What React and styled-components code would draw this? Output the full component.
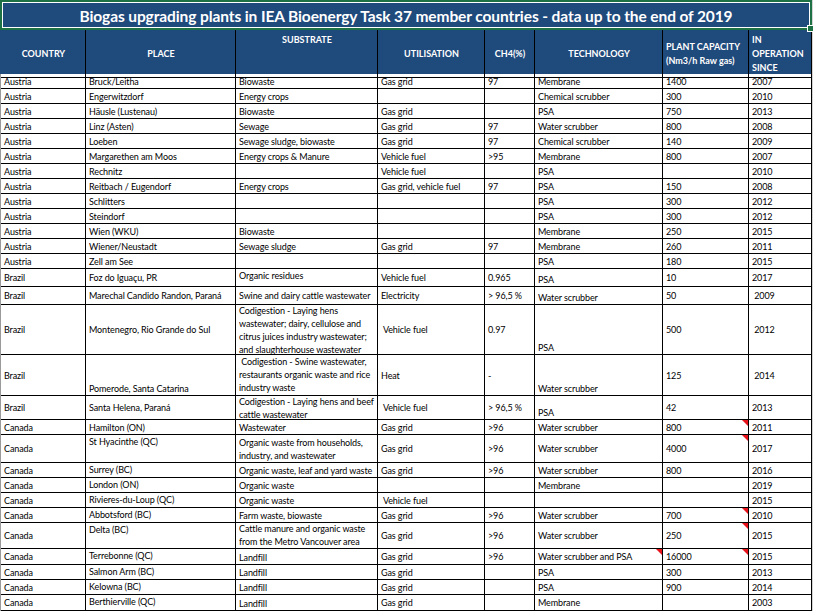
import React from 'react'
import styled, { createGlobalStyle } from 'styled-components'

const GlobalStyle = createGlobalStyle`
    html, body {
        margin : 0;
        padding : 0;
        background : #ffffff;
        overflow : hidden;
    }
    body {
        font-family : Lato, "Open Sans", sans-serif;
    }
`;

const COLS = '85px 150px 142px 107px 50px 128px 86px 63px';

// a cell is either a plain string or {t, v, mark}
const rows = [
    { h: 15, c: ['Austria', 'Bruck/Leitha', 'Biowaste', 'Gas grid', '97', 'Membrane', '1400', '2007'] },
    { h: 15, c: ['Austria', 'Engerwitzdorf', 'Energy crops', '', '', 'Chemical scrubber', '300', '2010'] },
    { h: 15, c: ['Austria', 'Häusle (Lustenau)', 'Biowaste', 'Gas grid', '', 'PSA', '750', '2013'] },
    { h: 15, c: ['Austria', 'Linz (Asten)', 'Sewage', 'Gas grid', '97', 'Water scrubber', '800', '2008'] },
    { h: 15, c: ['Austria', 'Loeben', 'Sewage sludge, biowaste', 'Gas grid', '97', 'Chemical scrubber', '140', '2009'] },
    { h: 15, c: ['Austria', 'Margarethen am Moos', 'Energy crops & Manure', 'Vehicle fuel', '>95', 'Membrane', '800', '2007'] },
    { h: 15, c: ['Austria', 'Rechnitz', '', 'Vehicle fuel', '', 'PSA', '', '2010'] },
    { h: 15, c: ['Austria', 'Reitbach / Eugendorf', 'Energy crops', 'Gas grid, vehicle fuel', '97', 'PSA', '150', '2008'] },
    { h: 15, c: ['Austria', 'Schlitters', '', '', '', 'PSA', '300', '2012'] },
    { h: 15, c: ['Austria', 'Steindorf', '', '', '', 'PSA', '300', '2012'] },
    { h: 15, c: ['Austria', 'Wien (WKU)', 'Biowaste', '', '', 'Membrane', '250', '2015'] },
    { h: 15, c: ['Austria', 'Wiener/Neustadt', 'Sewage sludge', 'Gas grid', '97', 'Membrane', '260', '2011'] },
    { h: 15, c: ['Austria', 'Zell am See', '', '', '', 'PSA', '180', '2015'] },
    { h: 18, c: ['Brazil', 'Foz do Iguaçu, PR', { t: 'Organic residues', v: 'flex-start' }, 'Vehicle fuel', '0.965', { t: 'PSA', v: 'flex-end' }, '10', '2017'] },
    { h: 18, c: ['Brazil', 'Marechal Candido Randon, Paraná', 'Swine and dairy cattle wastewater', 'Electricity', '> 96,5 %', { t: 'Water scrubber', v: 'flex-end' }, '50', '\u00a02009'] },
    {
        h: 50, c: ['Brazil', 'Montenegro, Rio Grande do Sul',
            'Codigestion - Laying hens\nwastewater; dairy, cellulose and\ncitrus juices industry wastewater;\nand slaughterhouse wastewater',
            '\u00a0Vehicle fuel', '0.97', { t: 'PSA', v: 'flex-end' }, '500', '\u00a02012']
    },
    {
        h: 41, c: ['Brazil', { t: 'Pomerode, Santa Catarina', v: 'flex-end' },
            { t: '\u00a0Codigestion - Swine wastewater,\nrestaurants organic waste and rice\nindustry waste', v: 'flex-start' },
            'Heat', '-', { t: 'Water scrubber', v: 'flex-end' }, '125', '\u00a02014']
    },
    {
        h: 24, c: ['Brazil', 'Santa Helena, Paraná', 'Codigestion - Laying hens and beef\ncattle wastewater',
            '\u00a0Vehicle fuel', '> 96,5 %', { t: 'PSA', v: 'flex-end' }, '42', '2013']
    },
    { h: 15, c: ['Canada', 'Hamilton (ON)', { t: 'Wastewater', v: 'flex-end' }, 'Gas grid', '>96', 'Water scrubber', { t: '800', mark: true }, '2011'] },
    {
        h: 28, c: ['Canada', { t: 'St Hyacinthe (QC)', v: 'flex-start' },
            { t: 'Organic waste from households,\nindustry, and wastewater', v: 'flex-end' },
            'Gas grid', '>96', 'Water scrubber', { t: '4000', mark: true }, '2017']
    },
    { h: 15, c: ['Canada', { t: 'Surrey (BC)', v: 'flex-start' }, { t: 'Organic waste, leaf and yard waste', v: 'flex-end' }, 'Gas grid', '>96', 'Water scrubber', '800', '2016'] },
    { h: 15, c: ['Canada', { t: 'London (ON)', v: 'flex-start' }, { t: 'Organic waste', v: 'flex-end' }, '', '', 'Membrane', '', '2019'] },
    { h: 15, c: ['Canada', { t: 'Rivieres-du-Loup (QC)', v: 'flex-start' }, { t: 'Organic waste', v: 'flex-end' }, '\u00a0Vehicle fuel', '', '', '', '2015'] },
    { h: 15, c: ['Canada', { t: 'Abbotsford (BC)', v: 'flex-start' }, { t: 'Farm waste, biowaste', v: 'flex-end' }, 'Gas grid', '>96', 'Water scrubber', { t: '700', mark: true }, '2010'] },
    {
        h: 26, c: ['Canada', { t: 'Delta (BC)', v: 'flex-start' },
            { t: 'Cattle manure and organic waste\nfrom the Metro Vancouver area', v: 'flex-end' },
            'Gas grid', '>96', 'Water scrubber', { t: '250', mark: true }, '2015']
    },
    { h: 16, c: ['Canada', { t: 'Terrebonne (QC)', v: 'flex-start' }, { t: 'Landfill', v: 'flex-end' }, 'Gas grid', '>96', { t: 'Water scrubber and PSA', mark: true }, { t: '16000', mark: true }, '2015'] },
    { h: 15, c: ['Canada', { t: 'Salmon Arm (BC)', v: 'flex-start' }, { t: 'Landfill', v: 'flex-end' }, 'Gas grid', '', 'PSA', '300', '2013'] },
    { h: 15, c: ['Canada', { t: 'Kelowna (BC)', v: 'flex-start' }, { t: 'Landfill', v: 'flex-end' }, 'Gas grid', '', 'PSA', '900', '2014'] },
    { h: 16, c: ['Canada', { t: 'Berthierville (QC)', v: 'flex-start' }, { t: 'Landfill', v: 'flex-end' }, 'Gas grid', '', 'Membrane', '', '2003'] },
];

const headers = [
    { t: 'COUNTRY', align: 'center', v: 'center' },
    { t: 'PLACE', align: 'center', v: 'center' },
    { t: 'SUBSTRATE', align: 'center', v: 'flex-start' },
    { t: 'UTILISATION', align: 'center', v: 'center' },
    { t: 'CH4(%)', align: 'center', v: 'center' },
    { t: 'TECHNOLOGY', align: 'center', v: 'center' },
    { t: 'PLANT CAPACITY\n(Nm3/h Raw gas)', align: 'left', v: 'center' },
    { t: 'IN\nOPERATION\nSINCE', align: 'left', v: 'flex-start' },
];

const App = () => {
    return (<>
        <GlobalStyle />
        <Sheet>
            <TitleBar>
                <h1>Biogas upgrading plants in IEA Bioenergy Task 37 member countries - data up to the end of 2019</h1>
                <Handle />
            </TitleBar>
            <HeaderRow>
                {headers.map((hd, i) => (
                    <HeadCell key={i} $align={hd.align} $v={hd.v}>
                        <span>{hd.t}</span>
                    </HeadCell>
                ))}
            </HeaderRow>
            {rows.map((row, r) => (
                <Row key={r} $h={row.h}>
                    {row.c.map((cell, i) => {
                        const c = typeof cell === 'string' ? { t: cell } : cell;
                        return (
                            <Cell key={i} $v={c.v || 'center'}>
                                <span>{c.t}</span>
                                {c.mark && <Marker />}
                            </Cell>
                        )
                    })}
                </Row>
            ))}
        </Sheet>
    </>);
}

const Sheet = styled.div`
    display : flex;
    flex-direction : column;
    border-right : 1px solid #d4d4d4;
    width : 812px;
`;

const TitleBar = styled.div`
    position : relative;
    height : 30px;
    box-sizing : border-box;
    background-color : #1f4a7c;
    border : 2px solid #1e7145;
    box-shadow : inset 0 0 0 1px #ffffff;
    display : flex;
    align-items : center;
    justify-content : center;
    h1 {
        margin : 0;
        padding-top : 2px;
        color : #ffffff;
        font-family : Lato, sans-serif;
        font-weight : 700;
        font-size : 15.5px;
        letter-spacing : -0.1px;
    }
`;

const Handle = styled.div`
    position : absolute;
    right : -4px;
    bottom : -4px;
    width : 5px;
    height : 5px;
    background-color : #1e7145;
    border : 1px solid #ffffff;
`;

const HeaderRow = styled.div`
    display : grid;
    grid-template-columns : ${COLS};
    height : 44px;
    background-color : #1f4a7c;
    border-left : 1px solid #1f4a7c;
    width : 811px;
`;

const HeadCell = styled.div`
    display : flex;
    box-sizing : border-box;
    align-items : ${p => p.$v};
    justify-content : ${p => p.$align === 'left' ? 'flex-start' : 'center'};
    border-right : 1px solid #000000;
    border-bottom : 1px solid #000000;
    padding : 3px 2px 2px 3px;
    span {
        color : #ffffff;
        font-weight : 700;
        font-size : 9px;
        line-height : 14px;
        white-space : pre-line;
        text-align : left;
    }
`;

const Row = styled.div`
    display : grid;
    grid-template-columns : ${COLS};
    height : ${p => p.$h}px;
    border-left : 1px solid #9a9a9a;
    width : 811px;
    box-sizing : border-box;
`;

const Cell = styled.div`
    position : relative;
    display : flex;
    box-sizing : border-box;
    align-items : ${p => p.$v};
    border-right : 1px solid #000000;
    border-bottom : 1px solid #000000;
    padding : 0 0 0 3px;
    overflow : hidden;
    span {
        color : #000000;
        font-size : 9px;
        line-height : 13px;
        letter-spacing : -0.1px;
        white-space : pre;
    }
`;

const Marker = styled.i`
    position : absolute;
    top : 0;
    right : 0;
    width : 0;
    height : 0;
    border-top : 6px solid #e8141b;
    border-left : 6px solid transparent;
`;

export default App;
